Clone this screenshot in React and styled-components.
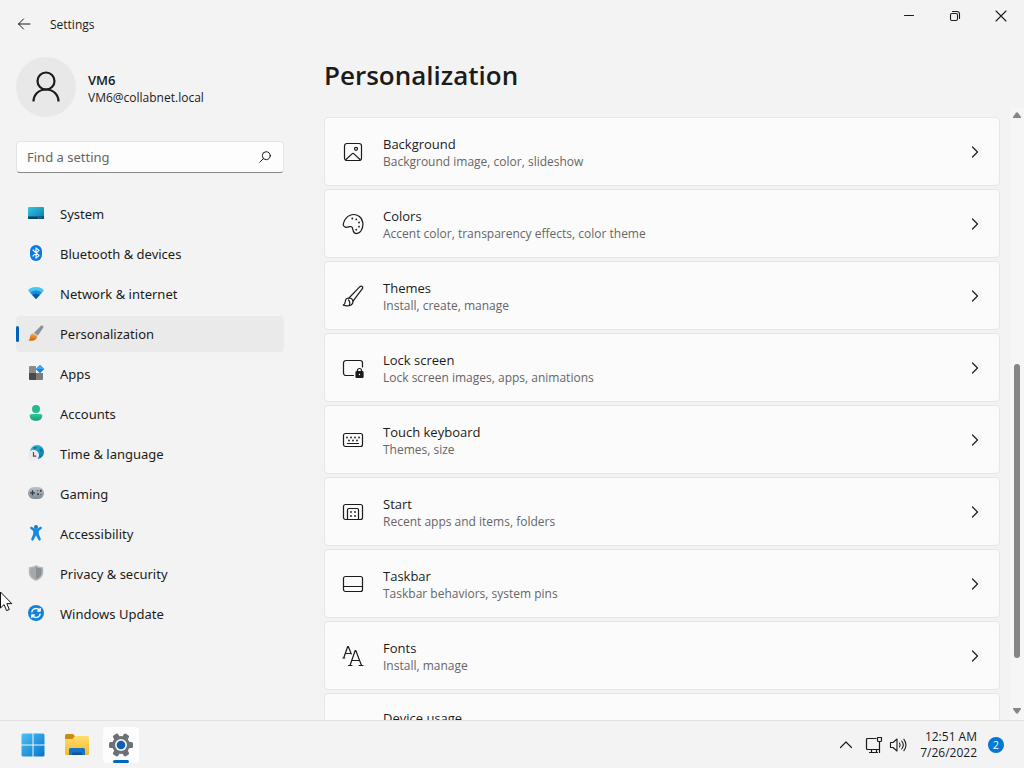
import React from "react";
import styled, { createGlobalStyle } from "styled-components";

const GlobalStyle = createGlobalStyle`
  *, *::before, *::after { box-sizing: border-box; }
  html, body, #root { height: 100%; }
  body {
    margin: 0;
    overflow: hidden;
    background: #f3f3f3;
    color: #1b1b1b;
    font-family: "Segoe UI", "Open Sans", "Noto Sans", sans-serif;
    font-size: 13px;
    line-height: 20px;
  }
  button, input { font: inherit; color: inherit; }
  svg { display: block; flex: none; }
`;

const Desktop = styled.div`
  height: 100vh;
  display: grid;
  grid-template-rows: 48px minmax(0, 1fr) 48px;
`;

const TitleBar = styled.header`
  display: flex;
  align-items: center;
  padding-left: 8px;
`;

const PlainButton = styled.button`
  display: flex;
  align-items: center;
  justify-content: center;
  padding: 0;
  border: 0;
  background: transparent;
`;

const BackButton = styled(PlainButton)`
  width: 32px;
  height: 32px;
`;

const AppName = styled.span`
  margin-left: 10px;
  padding-top: 2px;
  font-size: 12px;
`;

const WindowControls = styled.div`
  display: flex;
  align-self: flex-start;
  margin-left: auto;
`;

const WindowButton = styled(PlainButton)`
  width: 46px;
  height: 32px;
`;

const Body = styled.div`
  display: grid;
  grid-template-columns: 324px minmax(0, 1fr);
  min-height: 0;
`;

const Sidebar = styled.aside`
  padding: 9px 40px 0 16px;
`;

const Profile = styled.div`
  display: flex;
  align-items: center;
  gap: 12px;
  margin-bottom: 24px;
`;

const Avatar = styled.div`
  display: flex;
  align-items: center;
  justify-content: center;
  width: 60px;
  height: 60px;
  border-radius: 50%;
  background: #e8e8e8;
`;

const ProfileName = styled.div`
  margin-top: 2px;
  font-weight: 600;
  line-height: 20px;
`;

const ProfileMail = styled.div`
  font-size: 12px;
  line-height: 16px;
`;

const SearchBox = styled.label`
  display: flex;
  align-items: center;
  height: 32px;
  padding: 0 12px 0 10px;
  margin-bottom: 23px;
  border: 1px solid #e5e5e5;
  border-bottom-color: #868686;
  border-radius: 4px;
  background: #fdfdfd;
`;

const SearchInput = styled.input`
  flex: 1;
  min-width: 0;
  padding: 0;
  border: 0;
  outline: 0;
  background: transparent;
  font-family: "Segoe UI", "Noto Sans", sans-serif;
  &::placeholder { color: #666; opacity: 1; }
`;

const NavList = styled.nav`
  display: flex;
  flex-direction: column;
  gap: 4px;
  font-family: "Segoe UI", "Noto Sans", sans-serif;
`;

const NavLink = styled.a`
  display: flex;
  align-items: center;
  height: 36px;
  border-radius: 4px;
  color: inherit;
  text-decoration: none;
  background: ${(p) => (p.$active ? "#eaeaea" : "transparent")};
  &::before {
    content: "";
    width: 3px;
    height: 16px;
    margin-right: 9px;
    border-radius: 2px;
    background: ${(p) => (p.$active ? "#005fb8" : "transparent")};
  }
  svg { margin: 0 16px 2px 0; }
`;

const Main = styled.main`
  display: flex;
  flex-direction: column;
  min-height: 0;
`;

const PageTitle = styled.h1`
  margin: 0;
  padding: 9px 0 15px;
  font-size: 26px;
  line-height: 36px;
  font-weight: 600;
`;

const ScrollArea = styled.div`
  flex: 1;
  display: grid;
  grid-template-columns: minmax(0, 1fr) 14px;
  gap: 10px;
  min-height: 0;
`;

const CardList = styled.div`
  display: flex;
  flex-direction: column;
  gap: 3px;
  padding-top: 9px;
  overflow: hidden;
`;

const Card = styled.a`
  display: flex;
  flex: none;
  align-items: center;
  min-height: 69px;
  padding: 16px 18px 15px 17px;
  border: 1px solid #e7e7e7;
  border-radius: 4px;
  background: #fbfbfb;
  color: inherit;
  text-decoration: none;
  ${(p) => p.$tall && "align-items: flex-start; padding-top: 14px;"}
`;

const CardText = styled.div`
  flex: 1;
  min-width: 0;
  margin-left: 19px;
`;

const CardTitle = styled.div`
  line-height: 20px;
`;

const CardNote = styled.div`
  color: #666;
  font-size: 12px;
  line-height: 16px;
`;

const Scrollbar = styled.div`
  display: flex;
  flex-direction: column;
  align-items: center;
  padding: 4px 0 6px;
  background: #f6f6f6;
`;

const Track = styled.div`
  flex: 1;
  display: grid;
  grid-template-rows: 246fr 293fr 50fr;
  width: 6px;
`;

const Thumb = styled.div`
  grid-row: 2;
  border-radius: 3px;
  background: #868686;
`;

const Taskbar = styled.footer`
  display: flex;
  align-items: center;
  justify-content: space-between;
  padding: 0 20px 0 15px;
  border-top: 1px solid #e2e2e2;
  background: #f3f3f3;
`;

const TaskGroup = styled.div`
  display: flex;
  align-items: center;
  gap: 8px;
`;

const Tray = styled.div`
  display: flex;
  align-items: center;
`;

const TaskButton = styled(PlainButton)`
  position: relative;
  width: 36px;
  height: 36px;
  border-radius: 4px;
  background: ${(p) => (p.$active ? "#fdfdfd" : "transparent")};
  &::after {
    content: "";
    display: ${(p) => (p.$active ? "block" : "none")};
    position: absolute;
    left: 10px;
    right: 10px;
    bottom: 0;
    height: 3px;
    border-radius: 2px;
    background: #0067c0;
  }
`;

const TrayButton = styled(PlainButton)`
  width: ${(p) => (p.$wide ? "32px" : "24px")};
  height: 32px;
`;

const Clock = styled.time`
  margin: 0 11px 0 10px;
  text-align: right;
  font-size: 12px;
  line-height: 16px;
`;

const Badge = styled.span`
  width: 16px;
  height: 16px;
  border-radius: 50%;
  background: #0078d4;
  color: #fff;
  font-size: 11px;
  line-height: 16px;
  text-align: center;
`;

const Pointer = styled.svg`
  position: fixed;
  left: 0;
  top: 591px;
  pointer-events: none;
`;

const Line = ({ size = 22, width = 1.2, children }) => (
  <svg width={size} height={size} viewBox={`0 0 ${size} ${size}`} fill="none" stroke="#1b1b1b" strokeWidth={width} strokeLinecap="round" strokeLinejoin="round" aria-hidden="true">
    {children}
  </svg>
);

const Tile = ({ children }) => (
  <svg width="16" height="16" viewBox="0 0 16 16" aria-hidden="true">{children}</svg>
);

const Gradient = ({ id, from, to, x2 = 0, y2 = 1 }) => (
  <linearGradient id={id} x1="0" y1="0" x2={x2} y2={y2}>
    <stop stopColor={from} />
    <stop offset="1" stopColor={to} />
  </linearGradient>
);

const navItems = [
  { label: "System", icon: (
    <Tile>
      <defs><Gradient id="sys" from="#32c8e4" to="#0b78a8" x2={1} /></defs>
      <rect y="2" width="16" height="12" rx="1" fill="url(#sys)" />
      <path d="M0 11.500h16V13a1 1 0 0 1-1 1H1a1 1 0 0 1-1-1z" fill="#0b3f63" />
      <path d="M10 12.800h4" stroke="#4fb6dc" strokeWidth="0.8" strokeDasharray="1 0.6" />
    </Tile>
  ) },
  { label: "Bluetooth & devices", icon: (
    <Tile>
      <rect x="2" width="12" height="16" rx="6" fill="#0a78e6" />
      <path d="M5 5l6 5.700L8 13.200V2.800l3 2.500L5 11" fill="none" stroke="#fff" strokeWidth="1.100" strokeLinejoin="round" strokeLinecap="round" />
    </Tile>
  ) },
  { label: "Network & internet", icon: (
    <Tile>
      <path d="M8 14L.7 6.200a1.200 1.200 0 0 1 .1-1.800C5 1.300 11 1.300 15.200 4.400a1.200 1.200 0 0 1 .1 1.800z" fill="#46c5ee" />
      <path d="M8 14L2.200 7.700C5.600 4.900 10.400 4.900 13.800 7.700z" fill="#1b8bdc" />
      <path d="M8 14L4.300 10C6.500 8.200 9.500 8.200 11.700 10z" fill="#0b57b0" />
    </Tile>
  ) },
  { label: "Personalization", active: true, icon: (
    <Tile>
      <defs><Gradient id="paint" from="#f6a94c" to="#cf6410" /></defs>
      <path d="M5.800 8L13 .8c1.300-1.200 3.200.5 2.200 1.900L9.600 11z" fill="#8a9199" />
      <path d="M6.200 7.700l3.800 2.800-1.200 1.700-4-3z" fill="#c9ced3" />
      <path d="M5.100 8.500l3.900 3C9 15.300 4 16.600.4 15.200c1.800-1 1.200-2.600 1.700-4.300.5-1.500 1.600-2.400 3-2.400z" fill="url(#paint)" />
    </Tile>
  ) },
  { label: "Apps", icon: (
    <Tile>
      <path d="M1 2a1 1 0 0 1 1-1h6v7H1z" fill="#8b8b8b" />
      <path d="M1 8h7v7H2a1 1 0 0 1-1-1z" fill="#4a4a4a" />
      <path d="M8 8h7v6a1 1 0 0 1-1 1H8z" fill="#7b7b7b" />
      <path d="M12 0l4 4-4 4-4-4z" fill="#1683e0" stroke="#1683e0" strokeWidth=".6" strokeLinejoin="round" />
      <path d="M12 0l4 4h-8z" fill="#47a8f2" />
    </Tile>
  ) },
  { label: "Accounts", icon: (
    <Tile>
      <defs><Gradient id="acc" from="#2fcb9a" to="#149b78" /></defs>
      <circle cx="8" cy="4" r="4" fill="#26b98d" />
      <path d="M3.500 9h9c1 0 1.800.8 1.800 1.800 0 3-2.500 5-6.300 5s-6.300-2-6.300-5C1.700 9.800 2.500 9 3.500 9z" fill="url(#acc)" />
    </Tile>
  ) },
  { label: "Time & language", icon: (
    <Tile>
      <defs><Gradient id="time" from="#35c1d8" to="#0874b5" x2={1} /></defs>
      <circle cx="9" cy="7" r="7" fill="url(#time)" />
      <path d="M5 2.500l3-1 1 1.500-3 1.500zM11.500 4l2.500-.3 1 2.500-2.500.8zM11 10l2.500 1-1.500 2z" fill="#0878a0" />
      <circle cx="5.500" cy="10.300" r="5.500" fill="#eee9ec" />
      <path d="M5.500 7v4.200h2.800" fill="none" stroke="#4c4c55" strokeWidth="1.200" />
    </Tile>
  ) },
  { label: "Gaming", icon: (
    <Tile>
      <defs><Gradient id="game" from="#bcc3c9" to="#818b94" /></defs>
      <rect y="2" width="16" height="12" rx="5.800" fill="url(#game)" />
      <path d="M4.500 5.300v5M2 7.800h5" stroke="#333b43" strokeWidth="1.300" />
      <circle cx="10" cy="9.200" r="1" fill="#333b43" />
      <circle cx="12.800" cy="5.800" r="1" fill="#333b43" />
      <circle cx="9.800" cy="5.800" r=".7" fill="#55606a" />
      <circle cx="12.700" cy="9.400" r=".7" fill="#55606a" />
    </Tile>
  ) },
  { label: "Accessibility", icon: (
    <Tile>
      <circle cx="8" cy="2" r="2" fill="#1479c9" />
      <path d="M2.200 2.300c.5-.8 1.300-.7 2-.3 2.400 2 5.200 2 7.600 0 .7-.4 1.500-.5 2 .3.400.7.100 1.300-.5 1.800L10.800 6v3l2 5c.3 1.700-1.600 2.300-2.300 1L8 10.500 5.500 15c-.7 1.300-2.600.7-2.300-1l2-5V6L2.700 4.100c-.6-.5-.9-1.100-.5-1.800z" fill="#1889de" />
    </Tile>
  ) },
  { label: "Privacy & security", icon: (
    <Tile>
      <path d="M8 0c2 1.500 4.200 2 6.500 2.100.5 0 .7.300.7.800v4.500c0 3.900-2.700 6.500-7.200 8.400C3.500 13.900.8 11.300.8 7.400V2.900c0-.5.200-.8.700-.8C3.800 2 6 1.500 8 0z" fill="#b5b8ba" />
      <path d="M8 1.700c1.700 1.100 3.500 1.600 5.700 1.700v4c0 3-2 5.100-5.700 6.800z" fill="#8b8f92" />
      <path d="M8 1.700C6.300 2.800 4.500 3.300 2.300 3.400v4c0 3 2 5.100 5.700 6.800z" fill="#a4a8aa" />
    </Tile>
  ) },
  { label: "Windows Update", icon: (
    <Tile>
      <circle cx="8" cy="8" r="8" fill="#1283d8" />
      <path d="M3.700 7.300A4.400 4.400 0 0 1 11.800 5.600M12.300 8.700A4.400 4.400 0 0 1 4.200 10.400M12.200 3v3H9.200M3.800 13v-3h3" fill="none" stroke="#fff" strokeWidth="1.300" strokeLinejoin="round" />
    </Tile>
  ) },
];

const Dots = ({ points }) => points.map(([x, y]) => (
  <circle key={`${x}-${y}`} cx={x} cy={y} r="0.9" fill="#1b1b1b" stroke="none" />
));

const cards = [
  { title: "Background", note: "Background image, color, slideshow", icon: (
    <Line>
      <rect x="2.500" y="2.500" width="17" height="17" rx="2.500" />
      <path d="M4 18.500l6-5.600a1.500 1.500 0 0 1 2 0l6 5.600" />
      <circle cx="14" cy="7.800" r="1.500" />
    </Line>
  ) },
  { title: "Colors", note: "Accent color, transparency effects, color theme", icon: (
    <Line>
      <path d="M1.700 9.600C4 2.200 11.500-.5 17 3.200c4.600 3.200 4.900 9.800 2.200 14.300-2.600 4.100-7.200 4-8.100 0-.5-2.200-.7-4.500-3.400-3.900-1.600.4-2.600 1.100-4.300.6C1.100 13.500.9 11.700 1.700 9.600z" />
      <Dots points={[[10.300, 5.500], [14.300, 6.300], [17, 9.500], [17, 13.700], [14.300, 16.700]]} />
    </Line>
  ) },
  { title: "Themes", note: "Install, create, manage", icon: (
    <Line>
      <path d="M7 13L17.900 1.700c1.600-1.400 3.500.3 2.500 2L11 16.200" />
      <path d="M7 13c2.100.2 3.700 1.300 4 3.200M7 13c-2.200 0-3.600 1.300-3.700 3.500-.1 1.600-.6 2.900-2 3.600 2.400.9 5.500.9 7.600 0 1.500-.7 2.200-2.200 2.100-3.900M6.500 15c1.500 1.400 1.600 3 .9 5" />
    </Line>
  ) },
  { title: "Lock screen", note: "Lock screen images, apps, animations", icon: (
    <Line>
      <path d="M11.500 18.500H4A2.500 2.500 0 0 1 1.500 16V6A2.500 2.500 0 0 1 4 3.500h14A2.500 2.500 0 0 1 20.500 6v4" />
      <rect x="14" y="14.500" width="7" height="6" rx=".8" fill="#1b1b1b" />
      <path d="M15.500 14.500v-1a2 2 0 0 1 4 0v1" />
      <circle cx="17.500" cy="17.500" r=".7" fill="#fff" stroke="none" />
    </Line>
  ) },
  { title: "Touch keyboard", note: "Themes, size", icon: (
    <Line>
      <rect x="1.500" y="4.500" width="19" height="13" rx="2" />
      <path d="M5.500 14.500h11" />
      <Dots points={[[5, 8.500], [9, 8.500], [13, 8.500], [17, 8.500], [7, 11.500], [11, 11.500], [15, 11.500]]} />
    </Line>
  ) },
  { title: "Start", note: "Recent apps and items, folders", icon: (
    <Line>
      <rect x="1.500" y="3.500" width="19" height="15" rx="2" />
      <path d="M5.500 18.500V9A1.500 1.500 0 0 1 7 7.500h8A1.500 1.500 0 0 1 16.500 9v9.500" />
      <Dots points={[[9, 11], [13, 11], [9, 15], [13, 15]]} />
    </Line>
  ) },
  { title: "Taskbar", note: "Taskbar behaviors, system pins", icon: (
    <Line>
      <rect x="1.500" y="3.500" width="19" height="15" rx="2" />
      <path d="M1.500 13.500h19" />
    </Line>
  ) },
  { title: "Fonts", note: "Install, manage", icon: (
    <Line>
      <path d="M1.700 13L5.700 1.500h.6l3 7.500M3.200 8.500h5.500M.8 13h2" />
      <path d="M8 20.500L13.200 5.500h.6L19.500 20.500M10 15.500h7.500M6.500 20.500h3.500M17 20.500h4" />
    </Line>
  ) },
  { title: "Device usage", tall: true },
];

function NavItem({ label, icon, active }) {
  return (
    <NavLink href="#" $active={active} aria-current={active ? "page" : undefined}>
      {icon}
      {label}
    </NavLink>
  );
}

function SettingCard({ title, note, icon, tall }) {
  return (
    <Card href="#" $tall={tall}>
      {icon || <Line />}
      <CardText>
        <CardTitle>{title}</CardTitle>
        {note && <CardNote>{note}</CardNote>}
      </CardText>
      {!tall && <Line size={12}><path d="M3.500 1l5 5-5 5" /></Line>}
    </Card>
  );
}

export default function App() {
  return (
    <Desktop>
      <GlobalStyle />
      <TitleBar>
        <BackButton aria-label="Back">
          <Line size={16} width={1}><path d="M14 8H2.500M7.500 3L2.500 8l5 5" /></Line>
        </BackButton>
        <AppName>Settings</AppName>
        <WindowControls>
          <WindowButton aria-label="Minimize">
            <Line size={12} width={1}><path d="M1.500 5.500h9" /></Line>
          </WindowButton>
          <WindowButton aria-label="Restore">
            <Line size={12} width={1.100}>
              <rect x="1.500" y="3.500" width="7" height="7" rx="1.500" />
              <path d="M3.500 1.500H8A2.500 2.500 0 0 1 10.500 4v4.500" />
            </Line>
          </WindowButton>
          <WindowButton aria-label="Close">
            <Line size={12} width={1.100}><path d="M1 1l10 10M11 1L1 11" /></Line>
          </WindowButton>
        </WindowControls>
      </TitleBar>
      <Body>
        <Sidebar>
          <Profile>
            <Avatar>
              <Line size={32} width={2.200}>
                <circle cx="16" cy="10" r="8.500" />
                <path d="M3.500 30.500c0-6.500 5-12 12.500-12s12.500 5.500 12.500 12" strokeLinecap="butt" />
              </Line>
            </Avatar>
            <div>
              <ProfileName>VM6</ProfileName>
              <ProfileMail>VM6@collabnet.local</ProfileMail>
            </div>
          </Profile>
          <SearchBox>
            <SearchInput type="text" placeholder="Find a setting" aria-label="Find a setting" />
            <Line size={12} width={1}>
              <circle cx="7.300" cy="4.700" r="4" />
              <path d="M4.400 7.600L.8 11.200" />
            </Line>
          </SearchBox>
          <NavList>
            {navItems.map((item) => <NavItem key={item.label} {...item} />)}
          </NavList>
        </Sidebar>
        <Main>
          <PageTitle>Personalization</PageTitle>
          <ScrollArea>
            <CardList>
              {cards.map((card) => <SettingCard key={card.title} {...card} />)}
            </CardList>
            <Scrollbar>
              <svg width="8" height="6" viewBox="0 0 8 6" aria-hidden="true"><path d="M3.200.5h1.600L8 5v1H0V5z" fill="#868686" /></svg>
              <Track><Thumb /></Track>
              <svg width="8" height="6" viewBox="0 0 8 6" aria-hidden="true"><path d="M3.200 5.500h1.600L8 1V0H0v1z" fill="#868686" /></svg>
            </Scrollbar>
          </ScrollArea>
        </Main>
      </Body>
      <Taskbar>
        <TaskGroup>
          <TaskButton aria-label="Start">
            <svg width="24" height="24" viewBox="0 0 24 24" aria-hidden="true">
              <defs><Gradient id="win" from="#4cc2f6" to="#0873cb" x2={1} /></defs>
              <path d="M2 .5h9.500v11H.5V2A1.500 1.500 0 0 1 2 .5zM12.500.5H22A1.500 1.500 0 0 1 23.500 2v9.500h-11zM.5 12.500h11v11H2A1.500 1.500 0 0 1 .5 22zM12.500 12.500h11V22a1.500 1.500 0 0 1-1.500 1.500h-9.500z" fill="url(#win)" />
            </svg>
          </TaskButton>
          <TaskButton aria-label="File Explorer">
            <svg width="24" height="24" viewBox="0 0 24 24" aria-hidden="true">
              <defs><Gradient id="folder" from="#ffdd6b" to="#f5b92a" /></defs>
              <path d="M0 2.500A1.500 1.500 0 0 1 1.500 1H8l2.500 3v4H0z" fill="#c98b12" />
              <path d="M0 6h7.500L10 3h12.500A1.500 1.500 0 0 1 24 4.500v16a1.500 1.500 0 0 1-1.500 1.500h-21A1.500 1.500 0 0 1 0 20.500z" fill="url(#folder)" />
              <path d="M4 22v-5.500A1.500 1.500 0 0 1 5.500 15h13a1.500 1.500 0 0 1 1.500 1.500V22z" fill="#1673c6" />
              <path d="M7 22v-2.500h10V22z" fill="#0e559b" />
            </svg>
          </TaskButton>
          <TaskButton $active aria-label="Settings">
            <svg width="24" height="24" viewBox="0 0 24 24" aria-hidden="true">
              <g fill="#6c7177">
                {[0, 60, 120].map((angle) => (
                  <rect key={angle} x="0" y="9" width="24" height="6" rx="1.500" transform={`rotate(${angle} 12 12)`} />
                ))}
                <circle cx="12" cy="12" r="9" />
              </g>
              <circle cx="12" cy="12" r="6" fill="#eef3f8" />
              <circle cx="12" cy="12" r="4.300" fill="#125fae" />
            </svg>
          </TaskButton>
        </TaskGroup>
        <Tray>
          <TrayButton $wide aria-label="Show hidden icons">
            <Line size={12}><path d="M.5 8.500L6 3l5.500 5.500" /></Line>
          </TrayButton>
          <TrayButton aria-label="Network">
            <Line size={20} width={1.200}>
              <path d="M12 3.500H3.500A1 1 0 0 0 2.500 4.500v9a1 1 0 0 0 1 1h11.500M7.500 14.500v3M12.500 14.500v3M5.500 17.500h8" />
              <path d="M13.500 2.500h4v3a1 1 0 0 1-1 1h-2a1 1 0 0 1-1-1zM15.500 6.500v11" />
            </Line>
          </TrayButton>
          <TrayButton aria-label="Volume">
            <Line size={18} width={1.100}>
              <path d="M1.500 6.500H4L8 3v12l-4-3.500H1.500zM10.500 7c.8 1.200.8 2.800 0 4M12.700 5c1.800 2.300 1.800 5.700 0 8M14.900 3.300c2.700 3.300 2.700 8.100 0 11.400" />
            </Line>
          </TrayButton>
          <Clock dateTime="2022-07-26T00:51">12:51 AM<br />7/26/2022</Clock>
          <Badge>2</Badge>
        </Tray>
      </Taskbar>
      <Pointer width="13" height="21" viewBox="0 0 13 21" aria-hidden="true">
        <path d="M.5 1v16l3.600-3.400 2.500 6 2.700-1.100-2.500-5.900h5z" fill="#fff" stroke="#111" />
      </Pointer>
    </Desktop>
  );
}
